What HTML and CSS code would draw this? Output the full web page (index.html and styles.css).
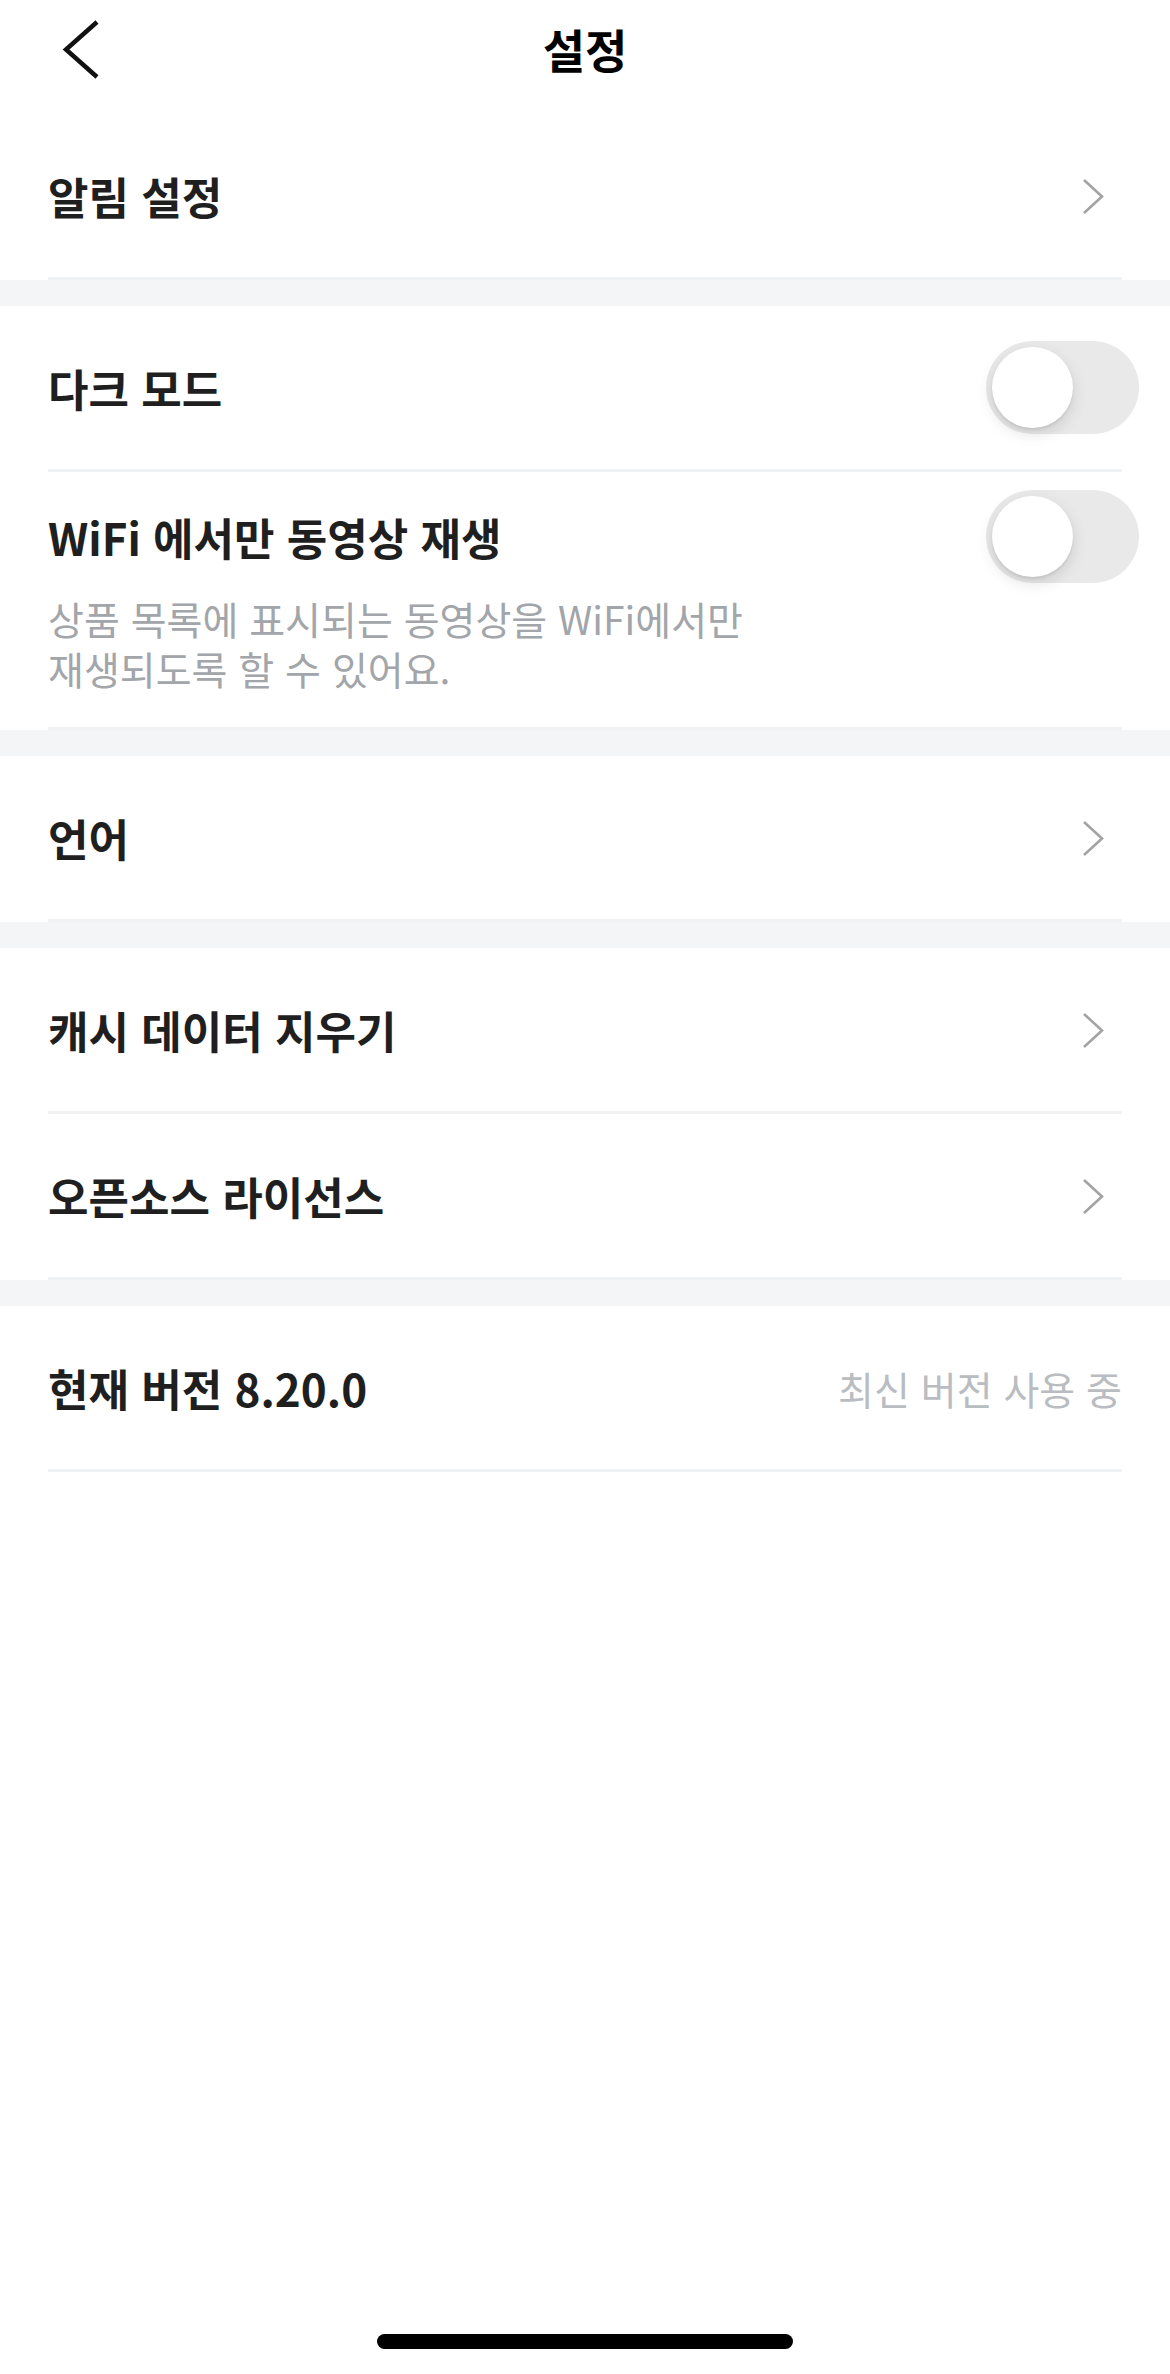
FILE: index.html
```html
<!DOCTYPE html>
<html lang="ko">
<head>
    <meta charset="UTF-8">
    <meta name="viewport" content="width=device-width, initial-scale=1.0">
    <title>설정</title>
    <link rel="stylesheet" href="styles.css">
</head>
<body>

    <div class="screen">
        <div class="top-bar">
            <div class="back">
                <svg width="40" height="62" viewBox="0 0 40 62">
                    <path d="M35 3 L4 30.5 L35 58" fill="none" stroke="#111" stroke-width="4.5"/>
                </svg>
            </div>
            <div class="title">설정</div>
            <div></div>
        </div>

        <!-- 알림 -->
        <div class="section">
            <div class="row">
                <div class="row-inner">
                    <span class="label">알림 설정</span>
                    <svg class="chevron" width="24" height="38" viewBox="0 0 24 38">
                        <path d="M3 3 L21 19.5 L3 36" fill="none" stroke="#a3a3a3" stroke-width="2.6"/>
                    </svg>
                </div>
            </div>
        </div>
        <div class="gap"></div>

        <!-- 화면 / 동영상 -->
        <div class="section">
            <div class="row">
                <div class="row-inner">
                    <span class="label">다크 모드</span>
                    <div class="toggle"><div class="knob"></div></div>
                </div>
            </div>
            <div class="row">
                <div class="row-inner tall">
                    <div class="row-top">
                        <span class="label">WiFi 에서만 동영상 재생</span>
                        <div class="toggle"><div class="knob"></div></div>
                    </div>
                    <p class="desc">상품 목록에 표시되는 동영상을 WiFi에서만<br>재생되도록 할 수 있어요.</p>
                </div>
            </div>
        </div>
        <div class="gap"></div>

        <!-- 언어 -->
        <div class="section">
            <div class="row">
                <div class="row-inner">
                    <span class="label">언어</span>
                    <svg class="chevron" width="24" height="38" viewBox="0 0 24 38">
                        <path d="M3 3 L21 19.5 L3 36" fill="none" stroke="#a3a3a3" stroke-width="2.6"/>
                    </svg>
                </div>
            </div>
        </div>
        <div class="gap"></div>

        <!-- 기타 -->
        <div class="section">
            <div class="row">
                <div class="row-inner">
                    <span class="label">캐시 데이터 지우기</span>
                    <svg class="chevron" width="24" height="38" viewBox="0 0 24 38">
                        <path d="M3 3 L21 19.5 L3 36" fill="none" stroke="#a3a3a3" stroke-width="2.6"/>
                    </svg>
                </div>
            </div>
            <div class="row">
                <div class="row-inner">
                    <span class="label">오픈소스 라이선스</span>
                    <svg class="chevron" width="24" height="38" viewBox="0 0 24 38">
                        <path d="M3 3 L21 19.5 L3 36" fill="none" stroke="#a3a3a3" stroke-width="2.6"/>
                    </svg>
                </div>
            </div>
        </div>
        <div class="gap"></div>

        <!-- 버전 -->
        <div class="section">
            <div class="row">
                <div class="row-inner">
                    <span class="label">현재 버전 8.20.0</span>
                    <span class="value">최신 버전 사용 중</span>
                </div>
            </div>
        </div>

        <div class="home-indicator"></div>
    </div>

</body>
</html>
```

FILE: styles.css
```css
body {
    margin: 0;
    background: #ffffff;
    font-family: "Noto Sans CJK KR", "Noto Sans", sans-serif;
    color: #222222;
}

.screen {
    display: flex;
    flex-direction: column;
    min-height: 2374px;
}

.top-bar {
    display: grid;
    grid-template-columns: 1fr auto 1fr;
    align-items: start;
    height: 114px;
}

.back {
    padding: 19px 0 0 62px;
}

.back svg {
    display: block;
}

.title {
    font-size: 46px;
    font-weight: 700;
    line-height: 96px;
    color: #000000;
}

.row {
    padding: 0 48px;
}

.row-inner {
    display: flex;
    align-items: center;
    justify-content: space-between;
    height: 163px;
    border-bottom: 3px solid #f1f2f4;
}

.row-inner.tall {
    display: block;
    height: auto;
    padding: 18px 0 34px;
}

.row-top {
    display: flex;
    align-items: center;
    justify-content: space-between;
    height: 93px;
}

.label {
    font-size: 44px;
    font-weight: 700;
    color: #1f1f1f;
}

.chevron {
    display: block;
    margin-right: 17px;
}

.value {
    font-size: 39px;
    color: #b9bcc0;
}

.desc {
    margin: 10px 0 0;
    font-size: 39px;
    line-height: 50px;
    color: #a2a5a9;
}

.gap {
    height: 26px;
    background-color: #f4f5f6;
}

/* iOS 스타일 토글 (꺼짐) */
.toggle {
    width: 153px;
    height: 93px;
    border-radius: 47px;
    background-color: #e9e9ea;
    margin-right: -17px;
    padding: 6px;
    box-sizing: border-box;
}

.knob {
    width: 81px;
    height: 81px;
    border-radius: 50%;
    background: #ffffff;
    box-shadow: 0 6px 16px rgba(0,0,0,0.12), 0 2px 3px rgba(0,0,0,0.08);
}

.home-indicator {
    width: 416px;
    height: 15px;
    border-radius: 8px;
    background: #000000;
    margin: auto auto 25px;
}
```
